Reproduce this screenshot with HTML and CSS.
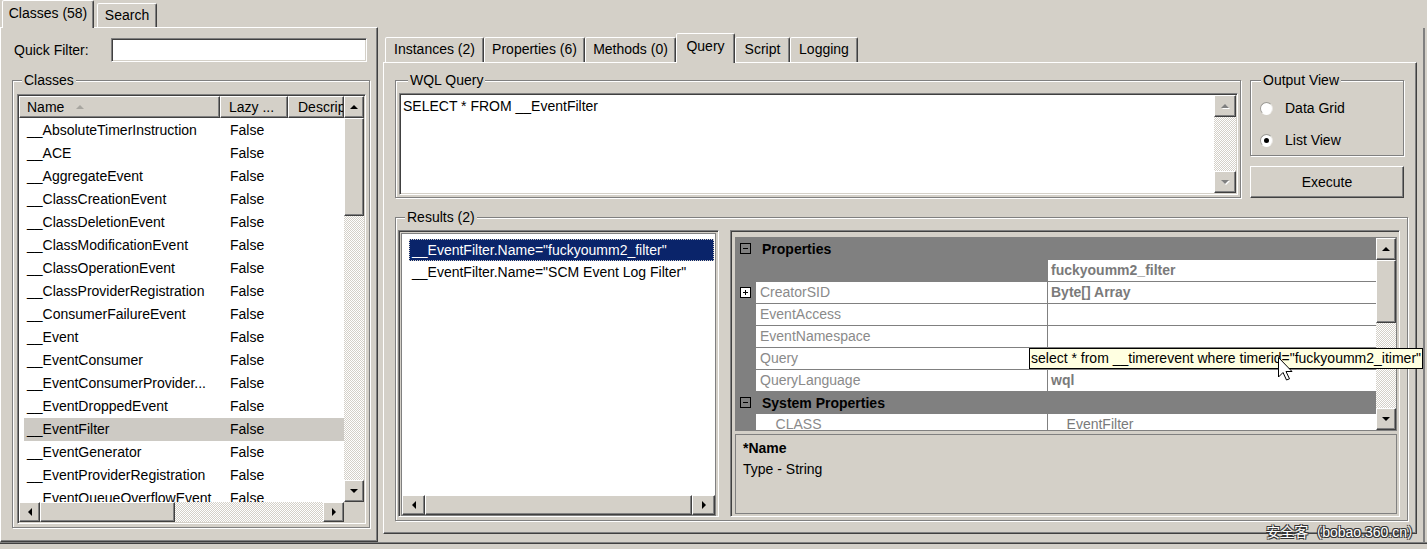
FILE: index.html
```html
<!DOCTYPE html>
<html lang="en">
<head>
  <meta charset="UTF-8" />
  <meta name="viewport" content="width=device-width, initial-scale=1.0"/>
  <title>WMI Explorer - Query</title>
  <link rel="stylesheet" href="styles.css">
</head>
<body>
  <div class="window">
    <!-- left: class browser -->
    <div class="left">
      <div class="tabstrip top-tabs">
        <div class="tab active tab-classes">Classes (58)</div>
        <div class="tab tab-search">Search</div>
      </div>
      <div class="page left-page">
        <div class="filter-row">
          <span class="filter-label">Quick Filter:</span>
          <div class="textbox sunken"></div>
        </div>
        <fieldset class="group classes-group">
          <legend>Classes</legend>
          <div class="listview sunken">
            <div class="lv-top">
              <div class="lv-main">
                <div class="lv-head">
                  <div class="hd hd-name">Name <span class="arr a-up sort"></span></div>
                  <div class="hd hd-lazy">Lazy ...</div>
                  <div class="hd hd-desc">Descrip</div>
                </div>
                <div class="lv-rows">
                  <div class="lv-row"><span class="c-name">__AbsoluteTimerInstruction</span><span class="c-lazy">False</span></div>
                  <div class="lv-row"><span class="c-name">__ACE</span><span class="c-lazy">False</span></div>
                  <div class="lv-row"><span class="c-name">__AggregateEvent</span><span class="c-lazy">False</span></div>
                  <div class="lv-row"><span class="c-name">__ClassCreationEvent</span><span class="c-lazy">False</span></div>
                  <div class="lv-row"><span class="c-name">__ClassDeletionEvent</span><span class="c-lazy">False</span></div>
                  <div class="lv-row"><span class="c-name">__ClassModificationEvent</span><span class="c-lazy">False</span></div>
                  <div class="lv-row"><span class="c-name">__ClassOperationEvent</span><span class="c-lazy">False</span></div>
                  <div class="lv-row"><span class="c-name">__ClassProviderRegistration</span><span class="c-lazy">False</span></div>
                  <div class="lv-row"><span class="c-name">__ConsumerFailureEvent</span><span class="c-lazy">False</span></div>
                  <div class="lv-row"><span class="c-name">__Event</span><span class="c-lazy">False</span></div>
                  <div class="lv-row"><span class="c-name">__EventConsumer</span><span class="c-lazy">False</span></div>
                  <div class="lv-row"><span class="c-name">__EventConsumerProvider...</span><span class="c-lazy">False</span></div>
                  <div class="lv-row"><span class="c-name">__EventDroppedEvent</span><span class="c-lazy">False</span></div>
                  <div class="lv-row sel"><span class="c-name">__EventFilter</span><span class="c-lazy">False</span></div>
                  <div class="lv-row"><span class="c-name">__EventGenerator</span><span class="c-lazy">False</span></div>
                  <div class="lv-row"><span class="c-name">__EventProviderRegistration</span><span class="c-lazy">False</span></div>
                  <div class="lv-row"><span class="c-name">__EventQueueOverflowEvent</span><span class="c-lazy">False</span></div>
                </div>
              </div>
              <div class="vscroll">
                <div class="sb-btn"><span class="arr a-up"></span></div>
                <div class="sb-thumb thumb-classes"></div>
                <div class="sb-track"></div>
                <div class="sb-btn"><span class="arr a-down"></span></div>
              </div>
            </div>
            <div class="lv-bottom">
              <div class="hscroll">
                <div class="sb-btn"><span class="arr a-left"></span></div>
                <div class="sb-thumb thumb-hclasses"></div>
                <div class="sb-track"></div>
                <div class="sb-btn"><span class="arr a-right"></span></div>
              </div>
              <div class="sb-corner"></div>
            </div>
          </div>
        </fieldset>
      </div>
    </div>

    <!-- right: instance tabs -->
    <div class="right">
      <div class="tabstrip right-tabs">
        <div class="tab rtab w-inst">Instances (2)</div>
        <div class="tab rtab w-props">Properties (6)</div>
        <div class="tab rtab w-meth">Methods (0)</div>
        <div class="tab rtab active w-query">Query</div>
        <div class="tab rtab w-script">Script</div>
        <div class="tab rtab w-log">Logging</div>
      </div>
      <div class="page right-page">
        <div class="query-top">
          <fieldset class="group wql-group">
            <legend>WQL Query</legend>
            <div class="wql sunken">
              <div class="wql-text">SELECT * FROM __EventFilter</div>
              <div class="vscroll wide">
                <div class="sb-btn"><span class="arr a-up dis"></span></div>
                <div class="sb-track"></div>
                <div class="sb-btn"><span class="arr a-down dis"></span></div>
              </div>
            </div>
          </fieldset>
          <div class="output-col">
            <fieldset class="group output-group">
              <legend>Output View</legend>
              <div class="radio-row"><span class="radio"></span>Data Grid</div>
              <div class="radio-row"><span class="radio on"></span>List View</div>
            </fieldset>
            <div class="button execute">Execute</div>
          </div>
        </div>

        <fieldset class="group results-group">
          <legend>Results (2)</legend>
          <div class="results-body">
            <div class="res-panel">
              <div class="res-list">
                <div class="res-items">
                  <div class="res-item sel">__EventFilter.Name="fuckyoumm2_filter"</div>
                  <div class="res-item">__EventFilter.Name="SCM Event Log Filter"</div>
                </div>
                <div class="hscroll res-hscroll">
                  <div class="sb-btn"><span class="arr a-left"></span></div>
                  <div class="sb-thumb full"></div>
                  <div class="sb-btn"><span class="arr a-right"></span></div>
                </div>
              </div>
            </div>

            <div class="grid-panel">
              <div class="pgrid">
                <div class="pg-rows">
                  <div class="cat"><span class="box"></span>Properties</div>
                  <div class="prop"><span class="pm"></span><span class="pl sel"></span><span class="pv b">fuckyoumm2_filter</span></div>
                  <div class="prop"><span class="pm"><span class="box plus"></span></span><span class="pl">CreatorSID</span><span class="pv b">Byte[] Array</span></div>
                  <div class="prop"><span class="pm"></span><span class="pl">EventAccess</span><span class="pv"></span></div>
                  <div class="prop"><span class="pm"></span><span class="pl">EventNamespace</span><span class="pv"></span></div>
                  <div class="prop"><span class="pm"></span><span class="pl">Query</span><span class="pv"></span></div>
                  <div class="prop"><span class="pm"></span><span class="pl">QueryLanguage</span><span class="pv b">wql</span></div>
                  <div class="cat"><span class="box"></span>System Properties</div>
                  <div class="prop"><span class="pm"></span><span class="pl">__CLASS</span><span class="pv">__EventFilter</span></div>
                </div>
                <div class="vscroll">
                  <div class="sb-btn"><span class="arr a-up"></span></div>
                  <div class="sb-thumb thumb-grid"></div>
                  <div class="sb-track"></div>
                  <div class="sb-btn"><span class="arr a-down"></span></div>
                </div>
              </div>
              <div class="pdesc">
                <div class="pdesc-title">*Name</div>
                <div class="pdesc-text">Type - String</div>
              </div>
            </div>
          </div>
        </fieldset>
      </div>
    </div>
    <div class="edge"></div>
  </div>

  <div class="tooltip">select * from __timerevent where timerid="fuckyoumm2_itimer"</div>
  <svg class="cursor" width="15" height="24" viewBox="0 0 15 24">
    <path d="M0.5 0.5 L0.5 20 L5 15.5 L8.5 23 L11.5 21.8 L8 14.5 L14 14.5 Z" fill="#fff" stroke="#000" stroke-width="1"/>
  </svg>
  <div class="watermark">安全客（bobao.360.cn）</div>
</body>
</html>
```

FILE: styles.css
```css
* {
  box-sizing: border-box;
}
body {
  margin: 0;
  width: 1427px;
  height: 549px;
  overflow: hidden;
  position: relative;
  background: #d4d0c8;
  color: #000;
  font: 14px "Liberation Sans", Arial, sans-serif;
}
.window {
  display: flex;
  height: 543px;
  border-bottom: 1px solid #808080;
  box-shadow: 0 1px #404040;
}

/* 3d borders */
.sunken {
  border: 1px solid;
  border-color: #808080 #fff #fff #808080;
  box-shadow: inset 1px 1px #404040, inset -1px -1px #d4d0c8;
  padding: 1px;
}
.page {
  background: #d4d0c8;
  border: 1px solid;
  border-color: #fff #404040 #404040 #fff;
  box-shadow: inset -1px -1px #808080;
}
.group {
  margin: 0;
  min-width: 0;
  border: 1px solid #808080;
  box-shadow: inset 1px 1px #fff, 1px 1px #fff;
}
.group legend {
  padding: 0 2px;
  line-height: 16px;
  background: #d4d0c8;
}

/* tabs */
.tabstrip {
  display: flex;
  align-items: flex-end;
}
.tab {
  height: 24px;
  line-height: 22px;
  border: 1px solid;
  border-bottom: none;
  border-color: #fff #404040 transparent #fff;
  box-shadow: inset -1px 0 #808080;
  border-radius: 2px 2px 0 0;
  background: #d4d0c8;
  text-align: center;
  white-space: nowrap;
}
.tab.active {
  height: 28px;
  line-height: 24px;
  margin-bottom: -1px;
  position: relative;
  z-index: 1;
}
.top-tabs {
  height: 27px;
  padding-left: 2px;
}
.tab-classes { width: 92px; }
.tab-search { width: 60px; margin-left: 3px; }

.right-tabs {
  height: 29px;
  padding-left: 2px;
}
.rtab { height: 25px; line-height: 23px; }
.rtab.active { height: 30px; line-height: 25px; }
.w-inst { width: 99px; }
.w-props { width: 101px; }
.w-meth { width: 91px; }
.w-query { width: 59px; }
.w-script { width: 55px; }
.w-log { width: 68px; }

/* left side */
.left {
  width: 378px;
  display: flex;
  flex-direction: column;
}
.left-page {
  flex: 1;
}
.filter-row {
  display: flex;
  align-items: center;
  height: 24px;
  margin-top: 10px;
  padding-left: 13px;
}
.filter-label {
  width: 97px;
}
.textbox {
  width: 256px;
  height: 24px;
  background: #fff;
}
.classes-group {
  width: 358px;
  height: 456px;
  margin: 10px 0 0 11px;
  padding: 6px 2px 3px 4px;
}
.classes-group legend {
  margin-left: 5px;
}
.listview {
  width: 349px;
  height: 430px;
  background: #fff;
  display: flex;
  flex-direction: column;
}
.lv-top {
  display: flex;
  flex: 1;
  min-height: 0;
}
.lv-main {
  flex: 1;
  overflow: hidden;
}
.lv-head {
  display: flex;
  height: 22px;
}
.hd {
  height: 22px;
  line-height: 20px;
  background: #d4d0c8;
  border: 1px solid;
  border-color: #fff #404040 #404040 #fff;
  box-shadow: inset -1px -1px #808080;
  white-space: nowrap;
  overflow: hidden;
  flex: none;
}
.hd-name { width: 201px; padding-left: 7px; }
.hd-lazy { width: 68px; padding-left: 8px; }
.hd-desc { width: 56px; padding-left: 9px; }
.arr.sort {
  display: inline-block;
  margin-left: 8px;
  vertical-align: 3px;
  border-bottom-color: #a8a6a0;
}
.lv-rows {
  padding-top: 1px;
}
.lv-row {
  display: flex;
  height: 23px;
  line-height: 23px;
  margin-left: 5px;
  white-space: nowrap;
}
.lv-row.sel {
  background: #cdcac4;
}
.c-name {
  width: 196px;
  padding-left: 3px;
  overflow: hidden;
}
.c-lazy {
  padding-left: 10px;
}
.lv-bottom {
  display: flex;
  height: 20px;
}
.sb-corner {
  width: 20px;
  background: #d4d0c8;
}

/* scrollbars */
.vscroll {
  width: 20px;
  flex: none;
  display: flex;
  flex-direction: column;
}
.vscroll.wide {
  width: 22px;
}
.hscroll {
  flex: 1;
  display: flex;
}
.sb-btn,
.sb-thumb,
.button {
  background: #d4d0c8;
  border: 1px solid;
  border-color: #fff #404040 #404040 #fff;
  box-shadow: inset -1px -1px #808080;
}
.sb-btn {
  flex: none;
  display: flex;
  align-items: center;
  justify-content: center;
}
.vscroll .sb-btn { height: 22px; }
.hscroll .sb-btn { width: 21px; }
.res-hscroll .sb-btn { width: 23px; }
.sb-thumb { flex: none; }
.sb-thumb.full { flex: 1; }
.thumb-classes { height: 98px; }
.thumb-hclasses { width: 135px; }
.thumb-grid { height: 63px; }
.sb-track {
  flex: 1;
  background: repeating-conic-gradient(#fff 0 25%, #d4d0c8 0 50%) 0 0 / 2px 2px;
}
.arr {
  width: 0;
  height: 0;
  border: 4px solid transparent;
}
.a-up { border-top-width: 0; border-bottom-color: #000; }
.a-down { border-bottom-width: 0; border-top-color: #000; }
.a-left { border-left-width: 0; border-right-color: #000; }
.a-right { border-right-width: 0; border-left-color: #000; }
.arr.dis { filter: drop-shadow(1px 1px 0 #fff); }
.a-up.dis { border-bottom-color: #808080; }
.a-down.dis { border-top-color: #808080; }

/* right side */
.right {
  display: flex;
  flex-direction: column;
  padding: 33px 0 0 5px;
}
.right-page {
  width: 1034px;
  height: 472px;
  padding: 9px 0 0 11px;
}
.query-top {
  display: flex;
}
.wql-group {
  width: 846px;
  height: 126px;
  padding: 5px 2px 2px 3px;
}
.wql-group legend {
  margin-left: 9px;
}
.wql {
  height: 102px;
  background: #fff;
  display: flex;
}
.wql-text {
  flex: 1;
  padding: 3px 2px;
  line-height: 16px;
}
.output-col {
  width: 154px;
  margin-left: 9px;
  display: flex;
  flex-direction: column;
}
.output-group {
  height: 84px;
  padding: 8px 4px 0 9px;
}
.output-group legend {
  margin-left: 1px;
}
.radio-row {
  display: flex;
  align-items: center;
  height: 24px;
}
.radio-row + .radio-row {
  margin-top: 8px;
}
.radio {
  width: 13px;
  height: 13px;
  margin-right: 12px;
  border-radius: 50%;
  border: 1px solid;
  border-color: #9c9a95 #e8e6e2 #fff #9c9a95;
  background: #fff;
  display: flex;
  align-items: center;
  justify-content: center;
}
.radio.on::after {
  content: "";
  width: 5px;
  height: 5px;
  border-radius: 50%;
  background: #000;
}
.execute {
  margin-top: 10px;
  height: 32px;
  display: flex;
  align-items: center;
  justify-content: center;
}
.results-group {
  width: 1013px;
  height: 312px;
  margin-top: 11px;
  padding: 5px 7px 3px 2px;
}
.results-group legend {
  margin-left: 7px;
}
.results-body {
  display: flex;
  height: 287px;
}
.res-panel {
  width: 321px;
  border: 1px solid;
  border-color: #808080 #fff #fff #808080;
  box-shadow: inset 1px 1px #404040;
  padding: 1px;
}
.res-list {
  height: 100%;
  margin: 1px;
  border: 1px solid #808080;
  background: #fff;
  display: flex;
  flex-direction: column;
}
.res-items {
  flex: 1;
  padding: 5px 1px 0 7px;
}
.res-item {
  height: 22px;
  line-height: 22px;
  padding-left: 3px;
  white-space: nowrap;
}
.res-item.sel {
  background: #0a246a;
  color: #fff;
  outline: 1px dotted #d4d0c8;
  outline-offset: -1px;
}
.res-hscroll {
  flex: none;
  height: 20px;
}

/* property grid */
.grid-panel {
  width: 670px;
  margin-left: 11px;
  border: 1px solid;
  border-color: #808080 #fff #fff #808080;
  box-shadow: inset 1px 1px #404040;
  padding: 6px 2px 2px 4px;
}
.pgrid {
  height: 194px;
  display: flex;
  background: #808080;
  border: 1px solid #808080;
}
.pg-rows {
  flex: 1;
  overflow: hidden;
}
.cat {
  display: flex;
  align-items: center;
  height: 21px;
  margin-bottom: 1px;
  padding-left: 4px;
  font-weight: bold;
}
.box {
  width: 11px;
  height: 11px;
  margin-right: 11px;
  border: 1px solid #000;
  position: relative;
  display: flex;
  align-items: center;
  justify-content: center;
}
.box::before {
  content: "";
  width: 5px;
  height: 1px;
  background: #000;
}
.box.plus {
  margin-right: 0;
  background: #fff;
}
.box.plus::after {
  content: "";
  position: absolute;
  width: 1px;
  height: 5px;
  background: #000;
}
.prop {
  display: flex;
  height: 21px;
  line-height: 21px;
  margin-bottom: 1px;
  white-space: nowrap;
}
.pm {
  width: 20px;
  padding-left: 4px;
  display: flex;
  align-items: center;
  flex: none;
}
.pl {
  width: 291px;
  flex: none;
  padding-left: 4px;
  background: #fff;
  color: #8a8a8a;
  overflow: hidden;
}
.pl.sel {
  background: #808080;
}
.pv {
  flex: 1;
  margin-left: 1px;
  padding-left: 3px;
  background: #fff;
  color: #7a7a7a;
  overflow: hidden;
}
.pv.b {
  font-weight: bold;
}
.pdesc {
  height: 80px;
  margin-top: 3px;
  border: 1px solid #808080;
  padding: 5px 7px;
  line-height: 16px;
}
.pdesc-title {
  font-weight: bold;
}
.pdesc-text {
  margin-top: 5px;
}

.edge {
  width: 2px;
  margin: 28px 0 0 6px;
  background: #808080;
}

/* overlays */
.tooltip {
  position: absolute;
  left: 1029px;
  top: 348px;
  height: 21px;
  line-height: 19px;
  padding: 0 1px;
  border: 1px solid #000;
  background: #ffffe1;
  white-space: nowrap;
}
.cursor {
  position: absolute;
  left: 1278px;
  top: 357px;
}
.watermark {
  position: absolute;
  right: 6px;
  top: 521px;
  line-height: 18px;
  font: 14px "Liberation Sans", "Noto Sans CJK SC", sans-serif;
  color: #fff;
  text-shadow: 1px 1px 0 #333, -1px -1px 0 #333, 1px -1px 0 #333, -1px 1px 0 #333;
}
```
